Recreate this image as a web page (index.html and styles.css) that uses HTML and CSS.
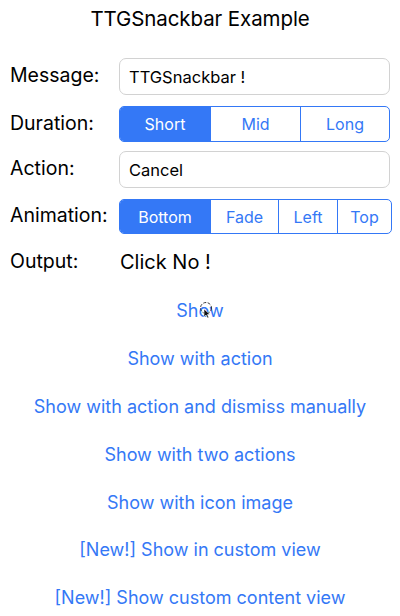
FILE: index.html
```html
<!DOCTYPE html>
<html>
<head>
<meta charset="utf-8">
<link rel="stylesheet" href="styles.css">
</head>
<body>
<div class="page">
  <div class="title">TTGSnackbar Example</div>
  <div class="form">
    <div class="row r-msg">
      <div class="label">Message:</div>
      <div class="input">TTGSnackbar !</div>
    </div>
    <div class="row r-dur">
      <div class="label">Duration:</div>
      <div class="seg">
        <div class="opt on w90">Short</div>
        <div class="opt w90">Mid</div>
        <div class="opt grow">Long</div>
      </div>
    </div>
    <div class="row r-act">
      <div class="label">Action:</div>
      <div class="input">Cancel</div>
    </div>
    <div class="row r-anim">
      <div class="label">Animation:</div>
      <div class="seg wide">
        <div class="opt on w90">Bottom</div>
        <div class="opt w68">Fade</div>
        <div class="opt w59">Left</div>
        <div class="opt grow">Top</div>
      </div>
    </div>
    <div class="row r-out">
      <div class="label">Output:</div>
      <div class="output">Click No !</div>
    </div>
  </div>
  <div class="buttons">
    <div class="btn first">Show<svg class="cursor" width="16" height="18" viewBox="0 0 16 18"><circle cx="7" cy="6" r="5.5" fill="none" stroke="#222" stroke-width="0.9" stroke-dasharray="3 1.5"/><path d="M5 7 L5 15 L7 13 L8.5 16 L9.8 15.4 L8.4 12.5 L11 12.5 Z" fill="#111" stroke="#fff" stroke-width="0.6"/></svg></div>
    <div class="btn">Show with action</div>
    <div class="btn">Show with action and dismiss manually</div>
    <div class="btn">Show with two actions</div>
    <div class="btn">Show with icon image</div>
    <div class="btn">[New!] Show in custom view</div>
    <div class="btn">[New!] Show custom content view</div>
  </div>
</div>
</body>
</html>
```
FILE: styles.css
```css
* { box-sizing: border-box; }
html, body { margin: 0; padding: 0; background: #fff; }
body {
  font-family: Inter, "Noto Sans", sans-serif;
  color: #000;
  width: 400px;
  height: 616px;
  overflow: hidden;
}
.page { display: flex; flex-direction: column; }
.title {
  height: 38px;
  line-height: 38px;
  text-align: center;
  font-size: 20.5px;
  letter-spacing: -0.1px;
}
.form {
  display: flex;
  flex-direction: column;
  padding-top: 20px;
}
.row {
  display: flex;
  align-items: center;
}
.label {
  width: 119px;
  padding-left: 10px;
  font-size: 19.5px;
  margin-top: -3px;
}
.input {
  width: 271px;
  height: 37px;
  border: 1px solid #d2d2d2;
  border-radius: 7px;
  padding-left: 9px;
  font-size: 16.5px;
  display: flex;
  align-items: center;
}
.seg {
  display: flex;
  width: 271px;
  height: 36px;
  border: 1px solid #3478f6;
  border-radius: 5px;
  overflow: hidden;
}
.seg.wide { width: 273px; height: 35px; }
.opt {
  display: flex;
  align-items: center;
  justify-content: center;
  color: #3478f6;
  font-size: 16px;
  border-left: 1px solid #3478f6;
}
.opt:first-child { border-left: none; }
.opt.on { background: #3478f6; color: #fff; }
.w90 { width: 90px; }
.w68 { width: 68px; }
.w59 { width: 59px; }
.grow { flex: 1; }
.r-dur { margin-top: 11px; }
.r-act { margin-top: 9px; }
.r-anim { margin-top: 11px; }
.r-out { margin-top: 15px; height: 26px; }
.output { font-size: 20px; padding-left: 1px; }
.buttons {
  display: flex;
  flex-direction: column;
  padding-top: 12px;
}
.btn {
  height: 47.8px;
  display: flex;
  align-items: center;
  justify-content: center;
  color: #3478f6;
  font-size: 18px;
  position: relative;
}
.cursor {
  position: absolute;
  left: 199px;
  top: 15px;
}
```
